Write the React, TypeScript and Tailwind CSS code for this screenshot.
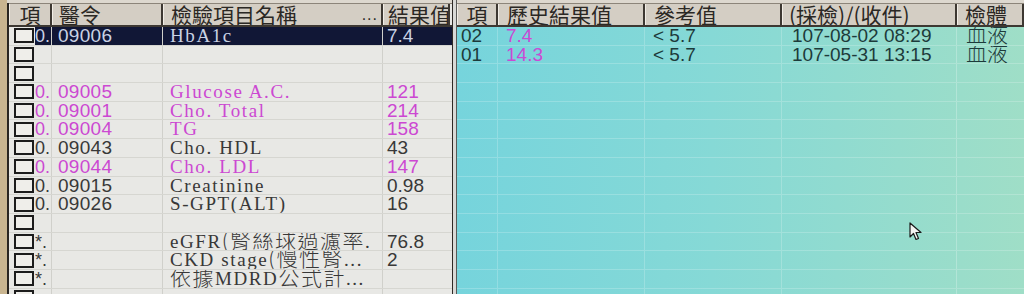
import { type ReactNode } from "react";

type Tone = "dark" | "pink" | "sel";

type LabRow = {
  prefix?: string;
  code?: string;
  name?: ReactNode;
  value?: string;
  tone?: Tone;
};

// CJK glyphs inside the latin name column; leading-[0] keeps the row from growing
const cjk = (s: string) => (
  <span className="text-[21px] leading-[0] tracking-[1.5px] font-['Noto_Sans_CJK_TC',sans-serif] font-light">
    {s}
  </span>
);

const labRows: LabRow[] = [
  { prefix: "0.", code: "09006", name: "HbA1c", value: "7.4", tone: "sel" },
  {},
  {},
  { prefix: "0.", code: "09005", name: "Glucose A.C.", value: "121", tone: "pink" },
  { prefix: "0.", code: "09001", name: "Cho. Total", value: "214", tone: "pink" },
  { prefix: "0.", code: "09004", name: "TG", value: "158", tone: "pink" },
  { prefix: "0.", code: "09043", name: "Cho. HDL", value: "43", tone: "dark" },
  { prefix: "0.", code: "09044", name: "Cho. LDL", value: "147", tone: "pink" },
  { prefix: "0.", code: "09015", name: "Creatinine", value: "0.98", tone: "dark" },
  { prefix: "0.", code: "09026", name: "S-GPT(ALT)", value: "16", tone: "dark" },
  {},
  {
    prefix: "*.",
    name: (
      <>
        eGFR{cjk("(腎絲球過濾率")}.
      </>
    ),
    value: "76.8",
    tone: "dark",
  },
  {
    prefix: "*.",
    name: (
      <>
        CKD stage{cjk("(慢性腎")}...
      </>
    ),
    value: "2",
    tone: "dark",
  },
  {
    prefix: "*.",
    name: (
      <>
        {cjk("依據")}MDRD{cjk("公式計")}...
      </>
    ),
    tone: "dark",
  },
  {},
];

const history = [
  { no: "02", result: "7.4", ref: "< 5.7", date: "107-08-02 08:29", kind: "血液" },
  { no: "01", result: "14.3", ref: "< 5.7", date: "107-05-31 13:15", kind: "血液" },
];

const toneClass: Record<Tone, string> = {
  dark: "text-[#383838]",
  pink: "text-[#cc48d2]",
  sel: "text-[#c9d2e4]",
};

const head =
  "h-full flex items-center leading-none border-r-2 border-r-[#3d3832] border-l border-l-[#f1ede6] bg-[#d4cec4] text-[21px] text-[#2b2824] font-['Noto_Sans_CJK_TC',sans-serif] overflow-hidden whitespace-nowrap";

const Checkbox = () => (
  <div className="w-[20px] h-[15px] border-2 border-[#1c1c1c] bg-[#efeeea]" />
);

const Cursor = () => (
  <svg
    className="absolute left-[909px] top-[222px]"
    width="14"
    height="19"
    viewBox="0 0 14 19"
  >
    <path
      d="M1 1 L1 15 L4.5 11.5 L7 17.5 L9.5 16.5 L7 10.5 L12 10.5 Z"
      fill="#f4f4f2"
      stroke="#1a1a1a"
      strokeWidth="1.2"
      strokeLinejoin="round"
    />
  </svg>
);

export default function App() {
  return (
    <div className="relative w-[1024px] h-[294px] overflow-hidden flex bg-[#c9b590] font-['Liberation_Sans',sans-serif]">
      {/* left panel: order list */}
      <div className="w-[452px] h-full flex flex-col pl-[7px]">
        <div className="h-[3px] bg-[#ddd8cf] shrink-0" />
        <div className="flex-1 flex flex-col border-l-2 border-[#2a2622] bg-[#e8e8e5]">
          <div className="h-[24px] flex shrink-0 border-t border-[#8c857a] border-b-2 border-b-[#3d3832]">
            <div className={`${head} w-[43px] justify-center`}>項</div>
            <div className={`${head} w-[111px] pl-[6px]`}>醫令</div>
            <div className={`${head} w-[220px] pl-[7px] justify-between pr-[3px]`}>
              <span>檢驗項目名稱</span>
              <span className="text-[16px] tracking-[1px] font-['Liberation_Sans',sans-serif]">...</span>
            </div>
            <div className={`${head} w-[67px] pl-[4px] border-r-0`}>結果值</div>
          </div>

          {labRows.map((r, i) => {
            const tone = toneClass[r.tone ?? "dark"];
            const sel = r.tone === "sel";
            return (
              <div
                key={i}
                className={`h-[18.7px] shrink-0 flex leading-[18.7px] border-b border-[#d6d6d1] overflow-hidden ${tone}`}
              >
                <div className="w-[26px] flex items-center justify-end pr-[1px] bg-[#e8e8e5]">
                  <Checkbox />
                </div>
                <div className={`flex flex-1 ${sel ? "bg-[#111736]" : ""}`}>
                  <div className="w-[17px] text-[18px] border-r border-[#d0d0cb] whitespace-nowrap overflow-hidden">
                    {r.prefix}
                  </div>
                  <div className="w-[111px] pl-[6px] text-[19px] tracking-[0.3px] border-r border-[#d0d0cb] whitespace-nowrap">
                    {r.code}
                  </div>
                  <div className="w-[220px] pl-[7px] text-[19px] tracking-[1.6px] font-['Liberation_Serif',serif] border-r border-[#d0d0cb] whitespace-nowrap overflow-hidden">
                    {r.name}
                  </div>
                  <div className="w-[67px] pl-[4px] text-[19px] whitespace-nowrap">
                    {r.value}
                  </div>
                </div>
              </div>
            );
          })}
        </div>
      </div>

      {/* splitter */}
      <div className="w-[5px] h-full bg-[#d9d9d6] border-l border-[#2e2a26] border-r border-r-[#5a5a58]" />

      {/* right panel: history */}
      <div className="flex-1 h-full flex flex-col">
        <div className="h-[3px] bg-[#ddd8cf] shrink-0" />
        <div className="flex-1 flex flex-col bg-[linear-gradient(to_right,#76d4dc,#86d9d6_45%,#9fdec7)]">
          <div className="h-[24px] flex shrink-0 border-t border-[#8c857a] border-b-2 border-b-[#3d3832]">
            <div className={`${head} w-[41px] justify-center`}>項</div>
            <div className={`${head} w-[147px] pl-[8px]`}>歷史結果值</div>
            <div className={`${head} w-[137px] pl-[8px]`}>參考值</div>
            <div className={`${head} w-[175px] pl-[6px]`}>(採檢)/(收件)</div>
            <div className={`${head} flex-1 pl-[7px] border-r-0`}>檢體</div>
          </div>

          {Array.from({ length: 15 }).map((_, i) => {
            const h = history[i];
            return (
              <div
                key={i}
                className="h-[18.7px] shrink-0 flex leading-[18.7px] text-[19px] text-[#1d3a3a] border-b border-white/20 overflow-hidden"
              >
                <div className="w-[41px] pl-[4px] border-r border-white/20">{h?.no}</div>
                <div className="w-[147px] pl-[8px] text-[#c94ad4] border-r border-white/20">{h?.result}</div>
                <div className="w-[137px] pl-[8px] border-r border-white/20">{h?.ref}</div>
                <div className="w-[175px] pl-[10px] border-r border-white/25 whitespace-nowrap">{h?.date}</div>
                <div className="flex-1 pl-[9px]">
                  <span className="text-[21px] leading-[0] font-['Noto_Sans_CJK_TC',sans-serif] font-light">
                    {h?.kind}
                  </span>
                </div>
              </div>
            );
          })}
        </div>
      </div>

      <Cursor />
    </div>
  );
}
